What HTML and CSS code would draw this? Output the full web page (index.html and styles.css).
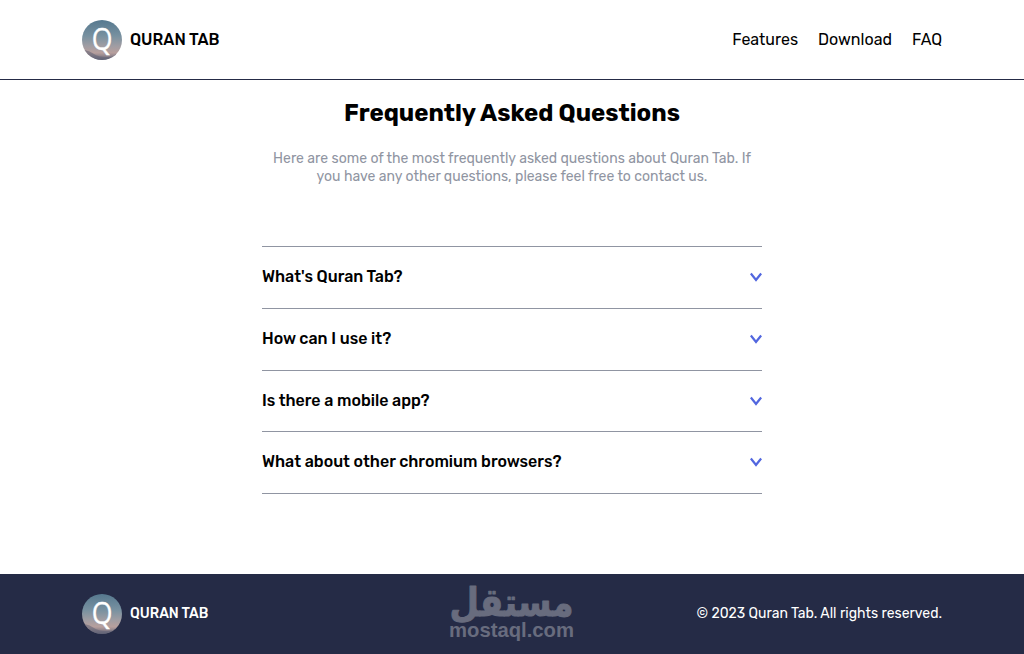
FILE: index.html
```html
<!DOCTYPE html>
<html lang="en">
<head>
    <meta charset="UTF-8">
    <meta name="viewport" content="width=device-width, initial-scale=1.0">
    <title>Quran Tab - FAQ</title>
    <link rel="stylesheet" href="styles.css">
</head>
<body>
    <!-- shared icons -->
    <svg class="sprite" aria-hidden="true">
        <defs>
            <linearGradient id="sky" x1="0" y1="0" x2="0" y2="1">
                <stop offset="0" stop-color="#56798f"/>
                <stop offset="0.4" stop-color="#7891a0"/>
                <stop offset="0.65" stop-color="#a09da3"/>
                <stop offset="0.82" stop-color="#b79f9d"/>
                <stop offset="1" stop-color="#626578"/>
            </linearGradient>
            <symbol id="logo" viewBox="0 0 40 40">
                <circle cx="20" cy="20" r="20" fill="url(#sky)"/>
                <path d="M2.5 30 Q8 31 12 34 T25 37 T34 34 A20 20 0 0 1 2.5 30Z" fill="#5f6175" opacity="0.55"/>
                <text class="logo-letter" transform="translate(20 29.5) scale(0.86 1)" text-anchor="middle">Q</text>
            </symbol>
            <symbol id="chevron" viewBox="0 0 12 10">
                <path d="M0.8 1.5 L6 8 L11.2 1.5" fill="none" stroke="#5267df" stroke-width="2.3"/>
            </symbol>
        </defs>
    </svg>

    <header class="header">
        <div class="container">
            <a class="brand" href="#">
                <svg class="logo"><use href="#logo"/></svg>
                <span class="brand-name">QURAN TAB</span>
            </a>
            <nav class="nav">
                <a href="#features">Features</a>
                <a href="#download">Download</a>
                <a href="#faq">FAQ</a>
            </nav>
        </div>
    </header>

    <main class="faq" id="faq">
        <h1 class="title">Frequently Asked Questions</h1>
        <p class="intro">Here are some of the most frequently asked questions about Quran Tab. If you have any other questions, please feel free to contact us.</p>

        <ul class="questions">
            <li><span>What's Quran Tab?</span><svg class="chevron"><use href="#chevron"/></svg></li>
            <li><span>How can I use it?</span><svg class="chevron"><use href="#chevron"/></svg></li>
            <li><span>Is there a mobile app?</span><svg class="chevron"><use href="#chevron"/></svg></li>
            <li><span>What about other chromium browsers?</span><svg class="chevron"><use href="#chevron"/></svg></li>
        </ul>
    </main>

    <footer class="footer">
        <div class="container">
            <a class="brand" href="#">
                <svg class="logo"><use href="#logo"/></svg>
                <span class="brand-name">QURAN TAB</span>
            </a>
            <p class="copyright">© 2023 Quran Tab. All rights reserved.</p>
        </div>
        <svg class="watermark" viewBox="0 0 124 60">
            <text class="watermark-ar" transform="translate(61.5 32) scale(0.87 1)" text-anchor="middle">مستقل</text>
            <text class="watermark-en" x="-1" y="53" textLength="125" lengthAdjust="spacingAndGlyphs">mostaql.com</text>
        </svg>
    </footer>
</body>
</html>
```

FILE: styles.css
```css
:root {
    --dark: #252b46;
    --gray: #9095a2;
}

* {
    box-sizing: border-box;
    margin: 0;
    padding: 0;
}

body {
    font-family: Rubik, Roboto, sans-serif;
    font-size: 16px;
    color: #000;
    background: #fff;
}

a {
    color: inherit;
    text-decoration: none;
}

.sprite {
    position: absolute;
    width: 0;
    height: 0;
}

.container {
    width: 860px;
    margin: 0 auto;
    display: flex;
    align-items: center;
    justify-content: space-between;
}

.header {
    height: 80px;
    padding-top: 20px;
    border-bottom: 1px solid var(--dark);
}

.brand {
    display: flex;
    align-items: center;
    gap: 8px;
    font-weight: 500;
}

.brand-name,
.nav,
.copyright {
    padding-bottom: 2px;
}

.logo {
    width: 40px;
    height: 40px;
}

.logo-letter {
    font-family: "Open Sans", sans-serif;
    font-size: 31px;
    fill: #fff;
    stroke: #fff;
    stroke-width: 0.3;
}

.nav {
    display: flex;
    gap: 20px;
}

.faq {
    width: 500px;
    height: 494px;
    margin: 0 auto;
    padding-top: 19px;
}

.title {
    font-size: 24px;
    line-height: 28px;
    text-align: center;
}

.intro {
    margin-top: 23px;
    font-size: 14px;
    line-height: 18px;
    text-align: center;
    color: var(--gray);
}

.questions {
    margin-top: 60px;
    list-style: none;
    border-top: 1px solid var(--gray);
}

.questions li {
    height: 61.75px;
    padding-bottom: 1.5px;
    display: flex;
    align-items: center;
    justify-content: space-between;
    font-weight: 500;
    border-bottom: 1px solid var(--gray);
}

.chevron {
    width: 12px;
    height: 10px;
    margin-top: 1px;
}

.footer {
    position: relative;
    height: 80px;
    padding-top: 20px;
    color: #fff;
    background: var(--dark);
    font-size: 14px;
}

/* sits over the middle of the footer */
.watermark {
    position: absolute;
    left: 450px;
    top: 10px;
    width: 124px;
    height: 60px;
    overflow: visible;
    fill: #686c7e;
}

.watermark-ar {
    font-family: "DejaVu Sans", sans-serif;
    font-size: 39px;
    font-weight: bold;
    stroke: #686c7e;
    stroke-width: 1;
    stroke-linejoin: round;
}

.watermark-en {
    font-family: "Liberation Sans", Arial, sans-serif;
    font-size: 21px;
    font-weight: bold;
}
```
